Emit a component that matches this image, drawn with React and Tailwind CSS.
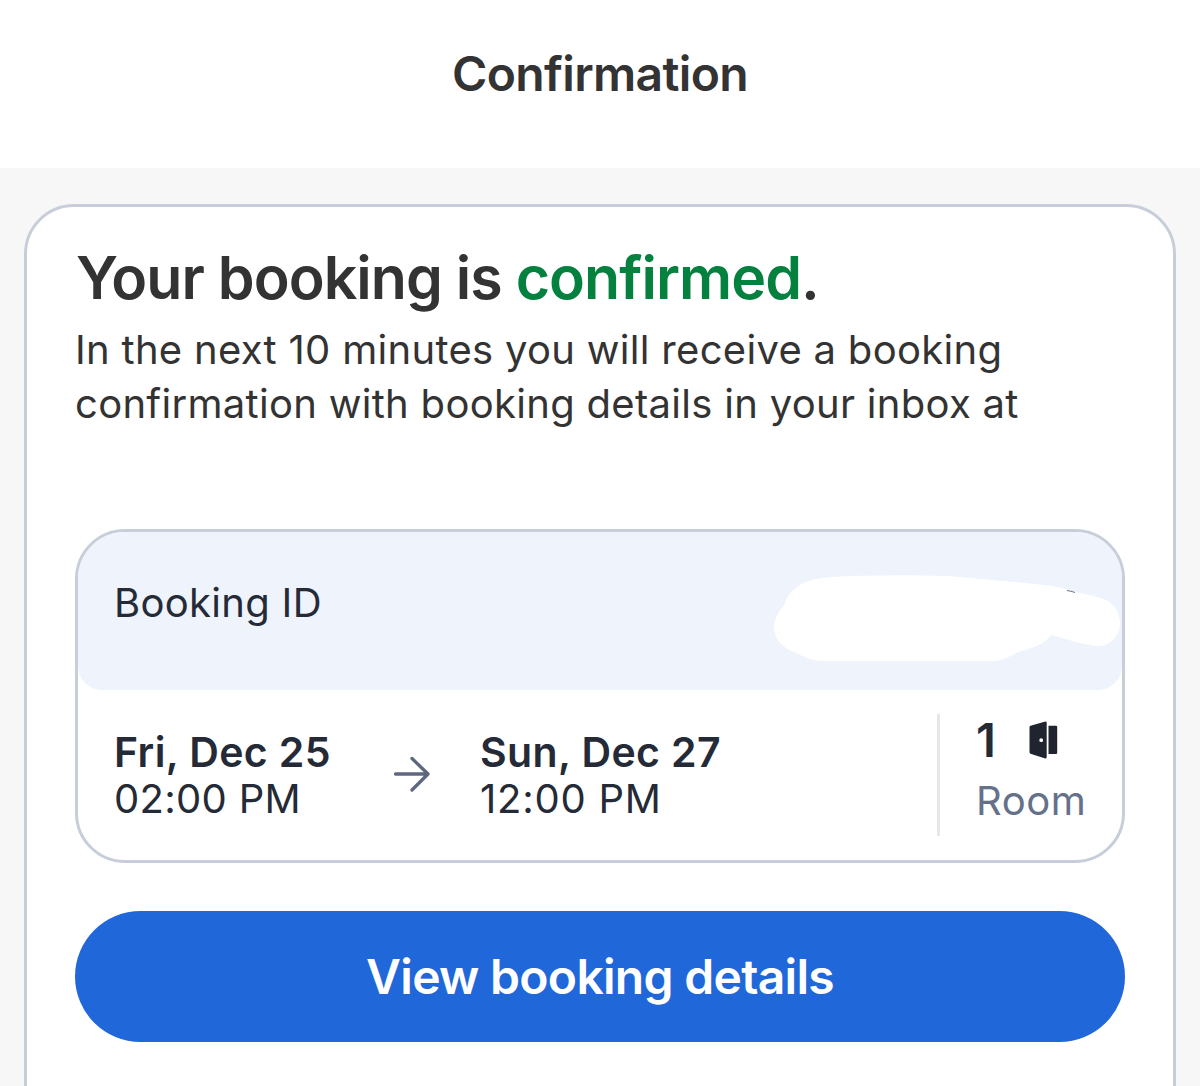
const t = "block whitespace-nowrap";

function HiddenId() {
  return (
    <svg className="h-[90px] w-[350px] shrink-0" viewBox="772 574 350 90" fill="white">
      <path d="M774 627C774 618 780 610 784 605C787 594 797 584 812 580C826 576 850 576 880 575.500C915 575 950 575 980 579C1015 582 1045 584 1066 589C1080 593 1090 595 1098 597C1111 600 1120 610 1120 623C1120 636 1109 647 1097 646C1081 644 1066 639 1051 635C1044 645 1030 649 1018 652C1009 657 1002 661 993 661H820C810 660 803 656 794 652C781 647 774 638 774 627Z" />
      <path d="M1067 590.500Q1071 591 1075 592.500" fill="none" stroke="#65718a" strokeWidth="1" />
    </svg>
  );
}

function ArrowIcon() {
  return (
    <svg className="mt-[65px] ml-[35px] h-[38px] w-[38px] shrink-0" viewBox="0 0 38 38" fill="none" stroke="#5d6880" strokeWidth="3.300" strokeLinecap="round" strokeLinejoin="round">
      <path d="M2.500 19H35M19 3.500L35 19L19 35" />
    </svg>
  );
}

function DoorIcon() {
  return (
    <svg className="h-[38px] w-[30px]" viewBox="0 0 30 38" fill="#20242f" fillRule="evenodd">
      <path d="M1.500 4.800L15.500.7Q17.700 0 17.700 2V36Q17.700 38 15.500 37.200L1.500 32.700Q.5 32.300 .5 31V6Q.5 5.200 1.500 4.800ZM12.200 17.300A1.900 1.900 0 1 0 12.200 21.100A1.900 1.900 0 1 0 12.200 17.300Z" />
      <path d="M19.500 4.800H27Q28.200 4.800 28.200 6V31.700Q28.200 33 27 33H19.500Z" />
    </svg>
  );
}

export default function App() {
  return (
    <div className="h-[1086px] overflow-hidden bg-[#f7f7f7] font-['Inter',sans-serif] text-[#333333]">
      <header className="flex h-[168px] justify-center bg-white pt-[44px]">
        <h1 className={t + " text-[48px] leading-[60px] font-semibold tracking-[-0.65px]"}>Confirmation</h1>
      </header>
      <main className="mx-6 mt-9 h-[1000px] rounded-t-[50px] border-[3px] border-[#c8ced9] bg-white px-12">
        <h2 className={t + " mt-[35px] ml-px text-[59px] leading-[72px] font-semibold tracking-[-0.95px]"}>
          Your booking is <span className="text-[#04803f]">confirmed</span>.
        </h2>
        <p className="mt-[9px] text-[40px] leading-[54px] tracking-[0.3px]">
          <span className={t}>In the next 10 minutes you will receive a booking</span>
          <span className={t}>confirmation with booking details in your inbox at</span>
        </p>
        <section className="mt-[98px] h-[334px] overflow-hidden rounded-[50px] border-[3px] border-[#c8ced9] text-[#252a37]">
          <div className="flex h-[158px] justify-between rounded-b-[24px] bg-[#eef3fc] pt-[42px] pl-[36px]">
            <span className={t + " text-[40px] leading-[58px] tracking-[0.3px]"}>Booking ID</span>
            <HiddenId />
          </div>
          <div className="flex">
            <div className="w-[280px] pt-[39px] pl-[36px] text-[40px] leading-[46px]">
              <b className={t + " text-[41px] leading-[47px] font-semibold tracking-[0.4px]"}>Fri, Dec 25</b>
              <span className={t + " tracking-[0.3px]"}>02:00 PM</span>
            </div>
            <ArrowIcon />
            <div className="ml-[49px] w-[457px] pt-[39px] text-[40px] leading-[46px]">
              <b className={t + " text-[41px] leading-[47px] font-semibold tracking-[0.4px]"}>Sun, Dec 27</b>
              <span className={t + " tracking-[0.75px]"}>12:00 PM</span>
            </div>
            <div className="mt-6 h-[122px] w-[3px] bg-[#e5e7eb]" />
            <div className="pl-[36px]">
              <div className="flex items-center pt-[25px]">
                <span className="w-[53px] text-[47px] leading-[50px] font-semibold">1</span>
                <DoorIcon />
              </div>
              <span className={t + " mt-[9px] text-[40px] leading-[54px] tracking-[0.5px] text-[#657089]"}>Room</span>
            </div>
          </div>
        </section>
        <button className={t + " mt-12 h-[131px] w-full rounded-full bg-[#2067da] text-center text-[48px] leading-[132px] font-semibold tracking-[-0.7px] text-white"}>
          View booking details
        </button>
      </main>
    </div>
  );
}
